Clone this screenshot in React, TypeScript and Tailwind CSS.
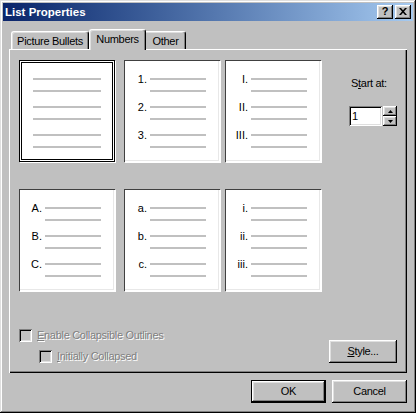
import React from "react";

const raised =
  "shadow-[inset_-1px_-1px_0_#000,inset_1px_1px_0_#fff,inset_-2px_-2px_0_#808080,inset_2px_2px_0_#dfdfdf]";
const sunken =
  "shadow-[inset_1px_1px_0_#808080,inset_-1px_-1px_0_#fff,inset_2px_2px_0_#000,inset_-2px_-2px_0_#dfdfdf]";

function Line({ w }: { w: string }) {
  return <div className={`h-[2px] bg-[#c0c0c0] ${w}`} />;
}

function Card({ labels, selected }: { labels?: string[]; selected?: boolean }) {
  const groups = labels ?? ["", "", ""];
  return (
    <div
      className={
        selected
          ? "w-[96px] h-[102px] bg-white flex flex-col pt-[13px] gap-[9px] shadow-[inset_0_0_0_1px_#000,inset_0_0_0_2px_#fff,inset_0_0_0_3px_#000,1px_1px_0_#fff]"
          : "w-[96px] h-[102px] bg-white flex flex-col pt-[13px] gap-[9px] shadow-[inset_1px_1px_0_#404040,inset_-1px_-1px_0_#fff,inset_-2px_-2px_0_#e8e8e8,1px_1px_0_#fff]"
      }
    >
      {groups.map((g, i) => (
        <div key={i} className="flex flex-col">
          {labels ? (
            <>
              <div className="flex items-center h-[12px]">
                <div className="w-[23px] text-right text-[11px] leading-[12px] text-black tracking-normal">{g}</div>
                <div className="ml-[3px]">
                  <Line w="w-[56px]" />
                </div>
              </div>
              <div className="mt-[5px] ml-[26px]">
                <Line w="w-[56px]" />
              </div>
            </>
          ) : (
            <>
              <div className="flex items-center h-[12px] ml-[14px]">
                <Line w="w-[68px]" />
              </div>
              <div className="mt-[5px] ml-[14px]">
                <Line w="w-[68px]" />
              </div>
            </>
          )}
        </div>
      ))}
    </div>
  );
}

function Checkbox() {
  return <div className={`w-[13px] h-[13px] bg-[#c0c0c0] ${sunken}`} />;
}

export default function App() {
  return (
    <div
      className="w-[416px] h-[413px] bg-[#c0c0c0] p-[3px] flex flex-col font-['Liberation_Sans',Arial,sans-serif] text-[11px] tracking-[-0.3px] text-black select-none shadow-[inset_-1px_-1px_0_#000,inset_1px_1px_0_#dfdfdf,inset_-2px_-2px_0_#808080,inset_2px_2px_0_#fff]"
    >
      {/* Title bar */}
      <div className="h-[18px] flex items-center justify-between pl-[2px] pr-[2px] bg-linear-to-r from-[#0a246a] to-[#a6caf0]">
        <span className="text-white font-bold text-[11.5px] leading-[14px] tracking-normal">List Properties</span>
        <div className="flex gap-[2px]">
          <div className={`w-[16px] h-[14px] bg-[#c0c0c0] flex items-center justify-center ${raised}`}>
            <span className="font-bold text-[11px] leading-[11px] text-black pb-[1px] tracking-normal">?</span>
          </div>
          <div className={`w-[16px] h-[14px] bg-[#c0c0c0] flex items-center justify-center ${raised}`}>
            <svg width="8" height="7" viewBox="0 0 8 7" className="mb-[1px]">
              <path d="M0 0h2l2 2.2L6 0h2L5 3.5 8 7H6L4 4.8 2 7H0l3-3.5z" fill="#000" />
            </svg>
          </div>
        </div>
      </div>

      {/* Tabs */}
      <div className="flex items-end h-[20px] mt-[8px] ml-[8px] relative z-10">
        <div className="w-[78px] h-[18px] flex items-center justify-center border-l border-t border-white border-r border-r-[#000] rounded-t-[3px] shadow-[inset_-1px_0_0_#808080,inset_1px_1px_0_#dfdfdf] bg-[#c0c0c0]">
          <span className="pt-[2px]">Picture Bullets</span>
        </div>
        <div className="w-[57px] h-[21px] -mb-[1px] flex items-center justify-center border-l border-t border-white border-r border-r-[#000] rounded-t-[3px] shadow-[inset_-1px_0_0_#808080,inset_1px_1px_0_#dfdfdf] bg-[#c0c0c0]">
          <span className="pb-[1px]">Numbers</span>
        </div>
        <div className="w-[40px] h-[18px] flex items-center justify-center border-t border-white border-r border-r-[#000] rounded-tr-[3px] shadow-[inset_-1px_0_0_#808080,inset_0_1px_0_#dfdfdf] bg-[#c0c0c0]">
          <span className="pt-[2px]">Other</span>
        </div>
      </div>

      {/* Panel */}
      <div className="mx-[6px] h-[324px] bg-[#c0c0c0] flex flex-col px-[10px] pt-[11px] pb-[10px] shadow-[inset_1px_1px_0_#fff,inset_-1px_-1px_0_#000,inset_-2px_-2px_0_#808080]">
        <div className="flex">
          <div className="flex flex-col gap-[27px]">
            <div className="flex">
              <Card selected />
              <div className="ml-[9px]">
                <Card labels={["1.", "2.", "3."]} />
              </div>
              <div className="ml-[5px]">
                <Card labels={["I.", "II.", "III."]} />
              </div>
            </div>
            <div className="flex">
              <Card labels={["A.", "B.", "C."]} />
              <div className="ml-[9px]">
                <Card labels={["a.", "b.", "c."]} />
              </div>
              <div className="ml-[5px]">
                <Card labels={["i.", "ii.", "iii."]} />
              </div>
            </div>
          </div>
          <div className="flex flex-col ml-[28px]">
            <div className="mt-[17px] ml-[2px] leading-[13px]">
              S<span className="underline underline-offset-[1px]">t</span>art at:
            </div>
            <div className="flex mt-[16px]">
              <div className={`w-[33px] h-[20px] bg-white flex items-center pl-[3px] ${sunken}`}>
                <span className="leading-[13px]">1</span>
              </div>
              <div className="flex flex-col ml-[1px]">
                <div className={`w-[14px] h-[10px] bg-[#c0c0c0] flex items-center justify-center ${raised}`}>
                  <svg width="5" height="3" viewBox="0 0 5 3">
                    <path d="M2.5 0L5 3H0z" fill="#000" />
                  </svg>
                </div>
                <div className={`w-[14px] h-[10px] bg-[#c0c0c0] flex items-center justify-center ${raised}`}>
                  <svg width="5" height="3" viewBox="0 0 5 3">
                    <path d="M0 0h5L2.5 3z" fill="#000" />
                  </svg>
                </div>
              </div>
            </div>
          </div>
        </div>

        <div className="flex-1" />

        <div className="flex items-end justify-between">
          <div className="flex flex-col gap-[8px]">
            <div className="flex items-center h-[13px]">
              <Checkbox />
              <span className="ml-[5px] text-[#808080] [text-shadow:1px_1px_0_#fff] leading-[13px]">
                <span className="underline underline-offset-[1px]">E</span>nable Collapsible Outlines
              </span>
            </div>
            <div className="flex items-center h-[13px] ml-[20px]">
              <Checkbox />
              <span className="ml-[5px] text-[#808080] [text-shadow:1px_1px_0_#fff] leading-[13px]">
                <span className="underline underline-offset-[1px]">I</span>nitially Collapsed
              </span>
            </div>
          </div>
          <div className={`w-[68px] h-[23px] bg-[#c0c0c0] flex items-center justify-center ${raised}`}>
            <span>
              <span className="underline underline-offset-[1px]">S</span>tyle...
            </span>
          </div>
        </div>
      </div>

      {/* Buttons */}
      <div className="flex justify-end gap-[6px] mt-[7px] mr-[6px]">
        <div className="w-[75px] h-[23px] border border-black bg-[#c0c0c0]">
          <div className={`w-full h-full flex items-center justify-center ${raised}`}>OK</div>
        </div>
        <div className={`w-[75px] h-[23px] bg-[#c0c0c0] flex items-center justify-center ${raised}`}>Cancel</div>
      </div>
    </div>
  );
}
